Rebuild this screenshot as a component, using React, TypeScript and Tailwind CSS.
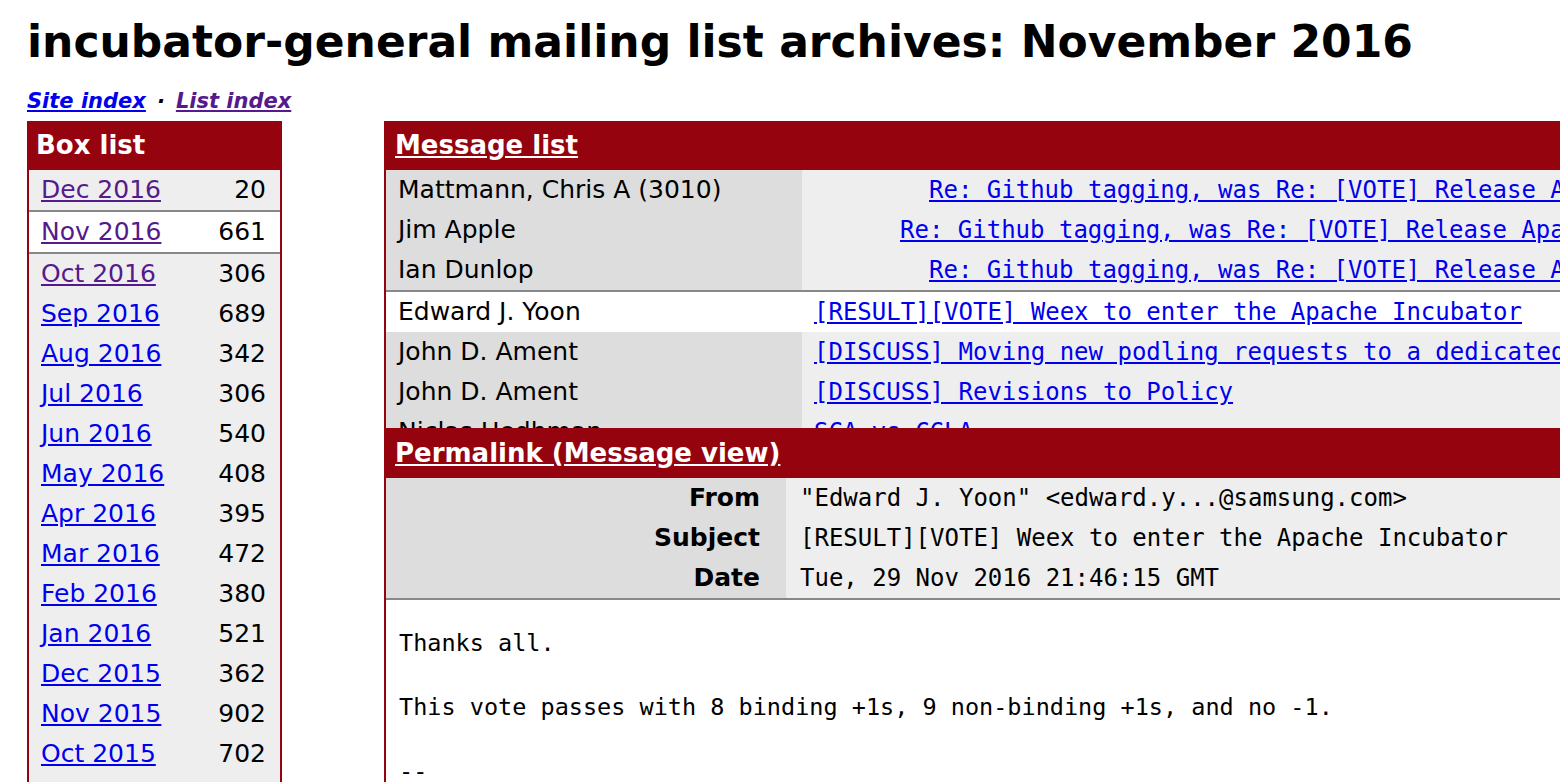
const RED = "bg-[#95030e]";

type Month = { label: string; count: string; visited?: boolean; current?: boolean };

const months: Month[] = [
  { label: "Dec 2016", count: "20", visited: true },
  { label: "Nov 2016", count: "661", visited: true, current: true },
  { label: "Oct 2016", count: "306", visited: true },
  { label: "Sep 2016", count: "689" },
  { label: "Aug 2016", count: "342" },
  { label: "Jul 2016", count: "306" },
  { label: "Jun 2016", count: "540" },
  { label: "May 2016", count: "408" },
  { label: "Apr 2016", count: "395" },
  { label: "Mar 2016", count: "472" },
  { label: "Feb 2016", count: "380" },
  { label: "Jan 2016", count: "521" },
  { label: "Dec 2015", count: "362" },
  { label: "Nov 2015", count: "902" },
  { label: "Oct 2015", count: "702" },
  { label: "Sep 2015", count: "536" },
];

type Msg = { author: string; subject: string; indent: string; current?: boolean };

const messages: Msg[] = [
  {
    author: "Mattmann, Chris A (3010)",
    subject: "Re: Github tagging, was Re: [VOTE] Release Apache Impala (incubating) 2.8.0",
    indent: "pl-[127px]",
  },
  {
    author: "Jim Apple",
    subject: "Re: Github tagging, was Re: [VOTE] Release Apache Impala (incubating) 2.8.0",
    indent: "pl-[98px]",
  },
  {
    author: "Ian Dunlop",
    subject: "Re: Github tagging, was Re: [VOTE] Release Apache Impala (incubating) 2.8.0",
    indent: "pl-[127px]",
  },
  {
    author: "Edward J. Yoon",
    subject: "[RESULT][VOTE] Weex to enter the Apache Incubator",
    indent: "pl-[12px]",
    current: true,
  },
  {
    author: "John D. Ament",
    subject: "[DISCUSS] Moving new podling requests to a dedicated list",
    indent: "pl-[12px]",
  },
  { author: "John D. Ament", subject: "[DISCUSS] Revisions to Policy", indent: "pl-[12px]" },
  { author: "Niclas Hedhman", subject: "SCA vs CCLA", indent: "pl-[12px]" },
];

const headers = [
  { label: "From", value: '"Edward J. Yoon" <edward.y...@samsung.com>' },
  { label: "Subject", value: "[RESULT][VOTE] Weex to enter the Apache Incubator" },
  { label: "Date", value: "Tue, 29 Nov 2016 21:46:15 GMT" },
];

const sans = "font-['DejaVu_Sans',Verdana,sans-serif]";
const mono = "font-['DejaVu_Sans_Mono',monospace]";

function BoxList() {
  return (
    <div className="w-[255px] shrink-0">
      <div className={`${RED} h-[49px] flex items-center px-[9px] text-white font-bold text-[26px]`}>
        Box list
      </div>
      <div className="border-x-2 border-[#95030e] bg-[#eeeeee]">
        {months.map((m) => (
          <div
            key={m.label}
            className={
              m.current
                ? "h-[44px] flex items-center justify-between pl-[12px] pr-[14px] bg-white border-y-2 border-[#888]"
                : "h-[40px] flex items-center justify-between pl-[12px] pr-[14px]"
            }
          >
            <a
              href="#"
              className={`underline ${m.visited ? "text-[#551a8b]" : "text-[#0000ee]"}`}
            >
              {m.label}
            </a>
            <span className="text-black">{m.count}</span>
          </div>
        ))}
      </div>
    </div>
  );
}

function MessageList() {
  return (
    <div>
      <div className={`${RED} h-[49px] flex items-center px-[11px]`}>
        <a href="#" className="text-white font-bold text-[26px] underline">
          Message list
        </a>
      </div>
      <div className="h-[258px] overflow-hidden border-l-2 border-[#95030e]">
        {messages.map((m, i) => (
          <div
            key={i}
            className={
              m.current
                ? "h-[42px] flex border-t-2 border-[#888] bg-white"
                : "h-[40px] flex"
            }
          >
            <div
              className={`w-[416px] shrink-0 flex items-center pl-[12px] whitespace-nowrap ${
                m.current ? "bg-white" : "bg-[#dddddd]"
              }`}
            >
              {m.author}
            </div>
            <div
              className={`flex-1 flex items-center whitespace-nowrap ${m.indent} ${
                m.current ? "bg-white" : "bg-[#eeeeee]"
              }`}
            >
              <a href="#" className={`${mono} text-[24px] text-[#0000ee] underline`}>
                {m.subject}
              </a>
            </div>
          </div>
        ))}
      </div>
    </div>
  );
}

function MessageView() {
  return (
    <div>
      <div className={`${RED} h-[50px] flex items-center px-[11px]`}>
        <a href="#" className="text-white font-bold text-[26px] underline">
          Permalink (Message view)
        </a>
      </div>
      <div className="border-l-2 border-[#95030e]">
        <div className="border-b-2 border-[#888]">
          {headers.map((h) => (
            <div key={h.label} className="h-[40px] flex">
              <div className="w-[400px] shrink-0 bg-[#dddddd] flex items-center justify-end pr-[26px] font-bold">
                {h.label}
              </div>
              <div className={`flex-1 bg-[#eeeeee] flex items-center pl-[14px] whitespace-nowrap ${mono} text-[24px]`}>
                {h.value}
              </div>
            </div>
          ))}
        </div>
        <pre className={`${mono} text-[23.5px] leading-[32px] pt-[27px] pl-[13px] pb-[40px] text-black`}>
          {"Thanks all.\n\nThis vote passes with 8 binding +1s, 9 non-binding +1s, and no -1.\n\n--\nBest Regards, Edward J. Yoon"}
        </pre>
      </div>
    </div>
  );
}

export default function App() {
  return (
    <div className={`w-[1560px] h-[782px] overflow-hidden bg-white text-black ${sans} text-[25px]`}>
      <div className="pl-[27px]">
        <h1 className="text-[44px] font-bold leading-[56px] pt-[14px] whitespace-nowrap">
          incubator-general mailing list archives: November 2016
        </h1>
        <div className="mt-[16px] h-[32px] flex items-center text-[21px] font-bold italic whitespace-nowrap">
          <a href="#" className="underline text-[#0000ee]">
            Site index
          </a>
          <span className="mx-[11px]">·</span>
          <a href="#" className="underline text-[#551a8b]">
            List index
          </a>
        </div>
        <div className="mt-[3px] flex gap-[102px]">
          <BoxList />
          <div className="w-[1300px] shrink-0">
            <MessageList />
            <MessageView />
          </div>
        </div>
      </div>
    </div>
  );
}
